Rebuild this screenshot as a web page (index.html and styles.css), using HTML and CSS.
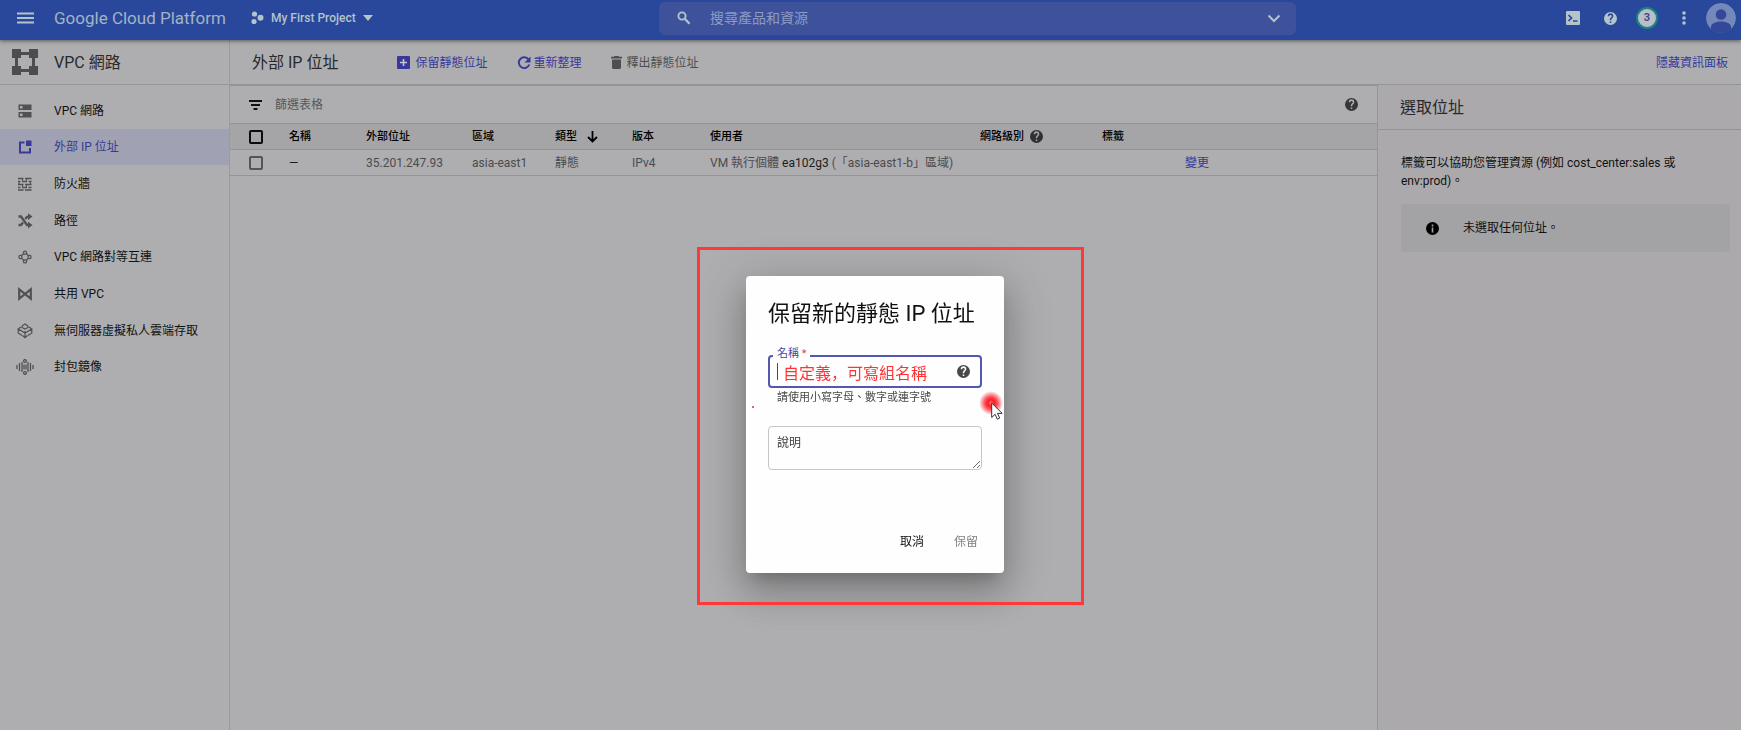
FILE: index.html
```html
<!DOCTYPE html>
<html lang="zh-Hant">
<head>
<meta charset="utf-8">
<title>外部 IP 位址 – VPC 網路</title>
<link rel="stylesheet" href="styles.css">
</head>
<body>
<svg class="defs" aria-hidden="true">
  <symbol id="help" viewBox="1 1 22 22"><path fill="currentColor" fill-rule="evenodd" d="M12 1a11 11 0 1 0 0 22 11 11 0 0 0 0-22zm1.300 18.500h-2.600v-2.500h2.600zm2.500-9.200-1 1.100c-.9.900-1.500 1.600-1.500 3.400h-2.600v-.6c0-1.300.6-2.400 1.500-3.300l1.300-1.400c.4-.4.600-.9.600-1.500a2.100 2.100 0 0 0-4.200 0H7.300a4.700 4.700 0 0 1 9.400 0c0 .9-.4 1.700-.9 2.300z"/></symbol>
</svg>
<header class="topbar">
  <div class="brand-group">
    <button class="icon-btn menu" aria-label="選單"><svg width="18" height="12" viewBox="0 0 18 12"><path d="M0 1.500h17M0 6h17M0 10.500h17" stroke="currentColor" stroke-width="2"/></svg></button>
    <span class="brand">Google Cloud Platform</span>
    <button class="project">
      <svg width="13" height="14" viewBox="0 0 13 14" fill="currentColor"><circle cx="3.500" cy="3" r="2.600"/><circle cx="3" cy="10.500" r="2.600"/><circle cx="9.500" cy="6.700" r="3"/></svg>
      <span>My First Project</span>
      <svg width="10" height="6" viewBox="0 0 10 6"><path d="M0 0h10L5 6z" fill="currentColor"/></svg>
    </button>
  </div>
  <div class="search">
    <svg width="14" height="14" viewBox="0 0 14 14" fill="none" stroke="currentColor"><circle cx="5" cy="5" r="3.600" stroke-width="1.900"/><path d="M7.800 7.800l4.700 5" stroke-width="2.200"/></svg>
    <input type="search" aria-label="搜尋產品和資源" placeholder="搜尋產品和資源">
    <svg width="14" height="9" viewBox="0 0 14 9"><path d="M1.500 1.500L7 7l5.500-5.500" fill="none" stroke="currentColor" stroke-width="2"/></svg>
  </div>
  <div class="tools">
    <button class="icon-btn" aria-label="Cloud Shell"><svg width="14" height="14" viewBox="0 0 14 14"><rect width="14" height="14" rx="1" fill="currentColor"/><path d="M2.500 4l3 3-3 3M7 10h4.500" fill="none" stroke="#29489b" stroke-width="1.700"/></svg></button>
    <button class="icon-btn" aria-label="說明"><svg width="13" height="13"><use href="#help"/></svg></button>
    <button class="icon-btn" aria-label="通知"><span class="count">3</span></button>
    <button class="icon-btn" aria-label="更多"><svg width="4" height="14" viewBox="0 0 4 14" fill="currentColor"><circle cx="2" cy="2" r="1.800"/><circle cx="2" cy="7" r="1.800"/><circle cx="2" cy="12" r="1.800"/></svg></button>
    <button class="icon-btn" aria-label="帳戶"><svg width="30" height="30" viewBox="0 0 30 30"><defs><clipPath id="av"><circle cx="15" cy="15" r="15"/></clipPath></defs><g clip-path="url(#av)"><circle cx="15" cy="15" r="15" fill="#7488ba"/><circle cx="15" cy="11.500" r="5.300" fill="#34489a"/><path d="M5 30v-7c2-6 18-6 20 0v7z" fill="#34489a"/></g></svg></button>
  </div>
</header>
<div class="layout">
  <aside class="sidebar">
    <div class="side-title">
      <svg width="26" height="26" viewBox="0 0 26 26" fill="#4d4d50"><path d="M0 0h9v9H0zM17 0h9v9h-9zM0 17h9v9H0zM17 17h9v9h-9z"/><path d="M9 3h8v3H9zM9 20h8v3H9zM3 9h3v8H3zM20 9h3v8h-3z"/></svg>
      <h2>VPC 網路</h2>
    </div>
    <nav class="nav">
      <a href="#"><svg width="16" height="16" viewBox="0 0 16 16"><path fill="currentColor" fill-rule="evenodd" d="M1.500 1.500h13V7h-13zM3 3v2.500h2.500V3zM1.500 9h13v5.500h-13zM3 10.500V13h2.500v-2.500z"/></svg>VPC 網路</a>
      <a href="#" class="active" aria-current="page"><svg width="16" height="16" viewBox="0 0 16 16"><path d="M7.500 3.500H3v10h10V9" fill="none" stroke="currentColor" stroke-width="2"/><path fill="currentColor" d="M9 1.500h5.500V7H9z"/></svg>外部 IP 位址</a>
      <a href="#"><svg width="16" height="16" viewBox="0 0 16 16" fill="none" stroke="currentColor"><path d="M1 2.500h5.500M8 2.500h6.500M1 5.500h2.500M5 5.500h5M11.500 5.500h3M1 8.500h5.500M8 8.500h6.500M1 11.500h2.500M5 11.500h5M11.500 11.500h3M1 14h5.500M8 14h6.500" stroke-width="1.500"/><path d="M5.500 2.500v3M9.500 2.500v3M5.500 8.500v3M9.500 8.500v3M13.500 5.500v3M2 5.500v3"/></svg>防火牆</a>
      <a href="#"><svg width="16" height="16" viewBox="0 0 16 16" fill="none" stroke="currentColor" stroke-width="2.300"><path d="M1.500 3.500H4l6 8.500h2M1.500 12H4l2-2.500M8.300 6L10 3.800h2"/><path d="M11 .300l4.500 3.300L11 7zM11 8.700l4.500 3.300-4.500 3.400z" fill="currentColor" stroke="none"/></svg>路徑</a>
      <a href="#"><svg width="14" height="14" viewBox="0 0 16 16" fill="none" stroke="currentColor" stroke-width="1.400"><circle cx="8" cy="3" r="1.800"/><circle cx="8" cy="13" r="1.800"/><circle cx="2.800" cy="8" r="1.800"/><circle cx="13.200" cy="8" r="1.800"/><path d="M4 6.500L6.700 4M9.300 4L12 6.500M4 9.500L6.700 12M9.300 12L12 9.500"/></svg>VPC 網路對等互連</a>
      <a href="#"><svg width="16" height="16" viewBox="0 0 16 16"><path d="M2.200 3.300v9.400L8 8zM13.800 3.300v9.400L8 8z" fill="none" stroke="currentColor" stroke-width="2.200"/></svg>共用 VPC</a>
      <a href="#"><svg width="16" height="16" viewBox="0 0 16 16" fill="none" stroke="currentColor" stroke-width="1.200"><path d="M5 3l3-2 3 2M5 3v1.500L8 6l3-1.500V3M4 4L1.200 6 8 10l6.800-4L12 4M1.200 6v4L5 12.500M14.800 6v4L11 12.500M8 8v6.500M5.500 12.500L8 14.700l2.500-2.200"/></svg>無伺服器虛擬私人雲端存取</a>
      <a href="#"><svg width="18" height="16" viewBox="0 0 18 16" fill="none" stroke="currentColor" stroke-width="1.300"><path d="M1 6v4M3.500 4v8M6 3v10M12 3v10M14.500 4v8M17 6v4M8 5.500v5M10 5.500v5"/><circle cx="9" cy="2" r="1.400"/><circle cx="9" cy="14" r="1.400"/></svg>封包鏡像</a>
    </nav>
  </aside>
  <div class="content">
    <div class="page-head">
      <h1>外部 IP 位址</h1>
      <div class="actions">
        <button><svg width="13" height="13" viewBox="0 0 13 13"><rect width="13" height="13" rx="1" fill="currentColor"/><path d="M6.500 3v7M3 6.500h7" stroke="#c5c5d2" stroke-width="1.600"/></svg>保留靜態位址</button>
        <button class="tight"><svg width="14" height="14" viewBox="0 0 14 14"><path d="M11.600 3.500A5.400 5.400 0 1 0 12.300 8.500" fill="none" stroke="currentColor" stroke-width="1.900"/><path d="M13.500 .500v6h-6z" fill="currentColor"/></svg>重新整理</button>
        <button class="muted" disabled><svg width="11" height="13" viewBox="0 0 11 13"><path fill="currentColor" d="M3.500 0h4l.7.800H11v1.700H0V.800h2.800zM1 3.500h9V12l-1 1H2l-1-1z"/></svg>釋出靜態位址</button>
      </div>
      <a href="#" class="hide-panel">隱藏資訊面板</a>
    </div>
    <div class="body">
      <main class="main">
        <div class="filter">
          <svg width="13" height="10" viewBox="0 0 13 10"><path d="M0 1h13M2 5h9M4.500 9h4" stroke="#111" stroke-width="2"/></svg>
          <input type="text" aria-label="篩選表格" placeholder="篩選表格">
          <svg class="dark" width="13" height="13"><use href="#help"/></svg>
        </div>
        <table>
          <colgroup><col class="c-check"><col class="c-name"><col class="c-addr"><col class="c-region"><col class="c-type"><col class="c-ver"><col class="c-user"><col class="c-tier"><col class="c-label"><col></colgroup>
          <thead><tr>
            <th><input type="checkbox" aria-label="全選"></th><th>名稱</th><th>外部位址</th><th>區域</th>
            <th>類型<svg class="sort" width="11" height="12" viewBox="0 0 11 12"><path d="M5.500 0v10.500M1 6l4.500 4.500L10 6" fill="none" stroke="#000" stroke-width="1.800"/></svg></th>
            <th>版本</th><th>使用者</th><th>網路級別<svg class="tip" width="13" height="13"><use href="#help"/></svg></th><th>標籤</th><th></th>
          </tr></thead>
          <tbody><tr>
            <td><input type="checkbox" aria-label="選取 35.201.247.93"></td><td class="ink">—</td><td>35.201.247.93</td><td>asia-east1</td><td>靜態</td><td>IPv4</td><td>VM 執行個體 <span class="ink">ea102g3</span> (「asia-east1-b」區域)</td><td></td><td></td><td><a href="#">變更</a></td>
          </tr></tbody>
        </table>
      </main>
      <aside class="info">
        <h3>選取位址</h3>
        <div class="info-body">
          <p>標籤可以協助您管理資源 (例如 cost_center:sales 或 env:prod)。</p>
          <div class="notice"><svg width="13" height="13" viewBox="0 0 13 13"><circle cx="6.500" cy="6.500" r="6.500"/><path d="M6.500 2.500v2M6.500 5.500v5" stroke="#a3a2a4" stroke-width="1.600"/></svg>未選取任何位址。</div>
        </div>
      </aside>
    </div>
  </div>
</div>
<div class="layer">
  <section class="dialog" role="dialog" aria-labelledby="dlg-title">
    <h2 id="dlg-title">保留新的靜態 IP 位址</h2>
    <div class="field">
      <label for="name">名稱 <span>*</span></label>
      <i class="caret"></i>
      <input id="name" type="text" lang="zh-Hans" value="自定義，可寫組名稱">
      <svg width="13" height="13"><use href="#help"/></svg>
    </div>
    <p class="hint">請使用小寫字母、數字或連字號</p>
    <textarea aria-label="說明" placeholder="說明"></textarea>
    <div class="buttons"><button>取消</button><button disabled>保留</button></div>
    <div class="frame"></div>
    <i class="speck"></i>
    <div class="glow"></div>
    <svg class="cursor" width="12" height="18" viewBox="0 0 12 18"><path d="M.700 1v14.500l3.400-3.200 2.200 4.900 2.400-1.100-2.200-4.700h4.700z" fill="#fff" stroke="#333340"/></svg>
  </section>
</div>
</body>
</html>
```
FILE: styles.css
```css
* { box-sizing: border-box; }
body {
  margin: 0;
  min-height: 100vh;
  display: flex;
  flex-direction: column;
  background: #aeaeb0;
  color: #111;
  font: 12px/18px Roboto, "Noto Sans CJK TC", sans-serif;
  text-spacing-trim: space-all;
}
h1, h2, h3, p { margin: 0; font-weight: 400; }
button { border: 0; padding: 0; background: none; color: inherit; font: inherit; }
input, textarea { font: inherit; }
a { color: #34389a; text-decoration: none; }
svg { flex: none; }
.defs { position: absolute; width: 0; height: 0; }

.topbar {
  position: relative;
  z-index: 1;
  height: 40px;
  padding-bottom: 4px;
  display: grid;
  grid-template-columns: 659fr 637fr 445fr;
  align-items: center;
  background: #29489b;
  color: #b3c4cb;
  box-shadow: 0 1px 4px rgba(0, 0, 0, .5);
}
.brand-group { display: flex; align-items: center; }
.icon-btn { display: flex; align-items: center; justify-content: center; }
.menu { width: 18px; margin: 0 19px 0 17px; }
.brand { min-width: 176px; font-size: 17px; color: #a4b3c6; }
.project { display: flex; align-items: center; gap: 7px; margin-left: 21px; font-weight: 500; }
.search {
  display: flex;
  align-items: center;
  gap: 19px;
  height: 33px;
  padding: 0 15px 0 18px;
  border-radius: 6px;
  background: #3e529b;
}
.search input { flex: 1; min-width: 0; border: 0; padding: 0; background: none; font-size: 14px; }
.search input::placeholder { color: #8b9bc4; }
.tools { display: flex; align-items: center; justify-content: flex-end; gap: 7px; padding-right: 5px; }
.tools .icon-btn { width: 30px; height: 30px; }
.count {
  width: 22px;
  height: 22px;
  border: 2px solid #1c8580;
  border-radius: 50%;
  background: #b9bfca;
  color: #444a80;
  font-size: 11px;
  line-height: 18px;
  font-weight: 700;
}

.layout { flex: 1; display: flex; }
.sidebar { width: 230px; flex: none; border-right: 1px solid #9b9b9f; }
.side-title {
  display: flex;
  align-items: center;
  gap: 16px;
  height: 45px;
  padding-left: 12px;
  border-bottom: 1px solid #97979a;
}
.side-title h2, .page-head h1, .info h3 { font-size: 16px; color: #29292b; }
.side-title h2, .page-head h1, .actions, .hide-panel { padding-top: 1px; }
.nav { display: grid; grid-auto-rows: 1fr; height: 293px; margin-top: 7px; }
.nav a {
  display: grid;
  grid-template-columns: 18px 1fr;
  align-items: center;
  gap: 20px;
  padding: 1px 0 0 16px;
  color: #111;
}
.nav svg { justify-self: center; color: #515154; }
.nav .active { background: #a0a2b3; color: #373b94; }
.nav .active svg { color: #373b94; }

.content { flex: 1; min-width: 0; display: flex; flex-direction: column; }
.page-head { display: flex; align-items: center; height: 45px; padding: 0 13px 0 22px; border-bottom: 1px solid #949497; }
.actions { display: flex; margin-left: 59px; gap: 30px; }
.actions button { display: flex; align-items: center; gap: 5px; color: #373899; }
.actions .tight { gap: 2px; }
.actions .muted { color: #4e4e51; gap: 4px; }
.hide-panel { margin-left: auto; }
.body { flex: 1; display: flex; }
.main { flex: 1; min-width: 0; border-top: 1px solid #949497; }
.filter { display: flex; align-items: center; gap: 13px; height: 37px; padding: 0 19px; }
.filter input { flex: 1; min-width: 0; border: 0; padding: 0; background: none; }
.filter input::placeholder { color: #56565a; }
.dark { color: #363638; }

table { width: 100%; table-layout: fixed; border-collapse: collapse; line-height: 16px; }
th, td { height: 26px; padding: 0 0 0 8px; text-align: left; border: solid #949497; border-width: 1px 0; white-space: nowrap; }
th { background: #a5a5a7; color: #000; font-size: 11px; font-weight: 500; }
td { color: #4b4b4f; }
th:first-child, td:first-child { padding-left: 19px; }
.ink { color: #1c1c1e; }
.c-check { width: 51px; }
.c-name { width: 77px; }
.c-addr { width: 106px; }
.c-region { width: 83px; }
.c-type { width: 77px; }
.c-ver { width: 78px; }
.c-user { width: 270px; }
.c-tier { width: 122px; }
.c-label { width: 83px; }
input[type="checkbox"] {
  appearance: none;
  display: block;
  width: 14px;
  height: 14px;
  margin: 0;
  border: 2px solid #0c0c0c;
  border-radius: 2px;
}
td input[type="checkbox"] { border-color: #555558; }
.sort { margin-left: 10px; vertical-align: middle; }
.tip { margin-left: 6px; vertical-align: middle; color: #303032; }

.info { width: 364px; flex: none; border-left: 1px solid #949497; background: #aba9ab; }
.info h3 { height: 45px; padding-left: 22px; line-height: 46px; border-bottom: 1px solid #949497; }
.info-body { padding: 24px 11px 0 23px; }
.notice {
  display: flex;
  align-items: center;
  gap: 24px;
  height: 48px;
  margin-top: 14px;
  padding-left: 25px;
  border-radius: 4px;
  background: #a3a2a4;
}

.layer { position: fixed; inset: 0; z-index: 2; display: flex; justify-content: center; align-items: flex-start; padding: 276px 0 0 9px; }
.dialog {
  position: relative;
  width: 258px;
  padding: 24px 22px 22px;
  border-radius: 4px;
  background: #fefefe;
  box-shadow: 0 11px 15px -7px rgba(0, 0, 0, .2), 0 20px 36px 3px rgba(0, 0, 0, .16), 0 9px 46px 8px rgba(0, 0, 0, .14);
}
.dialog h2 { font-size: 22px; line-height: 28px; white-space: nowrap; }
.field {
  position: relative;
  display: flex;
  align-items: center;
  height: 33px;
  margin-top: 27px;
  padding: 0 10px 0 7px;
  border: 2px solid #5257b2;
  border-radius: 4px;
  color: #48484a;
}
.field label { position: absolute; left: 3px; top: -12px; padding: 0 4px; background: #fefefe; color: #4548a8; font-size: 11px; }
.field label span { color: #e0406a; }
.caret { width: 1px; height: 17px; margin-right: 5px; background: #3c4196; }
.field input {
  flex: 1;
  min-width: 0;
  border: 0;
  padding: 0;
  background: none;
  outline: 0;
  color: #f33;
  font: 16px/24px "Noto Sans CJK SC", sans-serif;
}
.hint { margin: 1px 0 0 9px; font-size: 11px; color: #48484a; white-space: nowrap; }
.dialog textarea { display: block; width: 100%; height: 44px; margin-top: 19px; padding: 7px 8px; border: 1px solid #c6c6c8; border-radius: 4px; background: none; }
.dialog textarea::placeholder { color: #3b3b3e; }
.buttons { display: flex; justify-content: flex-end; gap: 30px; margin: 63px 4px 0 0; }
.buttons button:disabled { color: #808083; }
.frame { position: absolute; inset: -29px -80px -32px -49px; border: 3px solid #ff3838; pointer-events: none; }
.speck { position: absolute; left: 6px; top: 130px; width: 2px; height: 2px; background: #e0607c; }
.glow { position: absolute; right: 1px; top: 115px; width: 24px; height: 24px; border-radius: 50%; background: radial-gradient(circle closest-side, #ff8080 0, #fb1d24 25%, rgba(251, 40, 46, .85) 50%, rgba(255, 60, 60, 0) 100%); }
.cursor { position: absolute; right: 1px; top: 126px; }
```
